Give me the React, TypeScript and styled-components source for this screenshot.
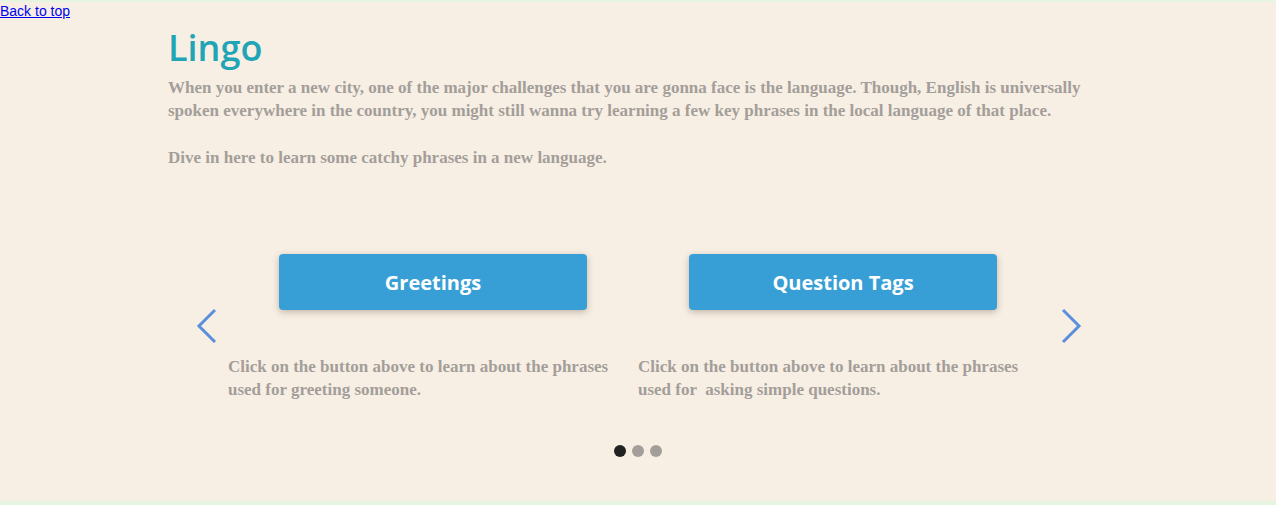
import React from 'react';
import styled, { createGlobalStyle } from 'styled-components';

const GlobalStyle = createGlobalStyle`
  html, body {
    margin: 0;
    padding: 0;
    background: #e6f5e0;
  }
`;

const Page = styled.div`
  margin: 2px 0 0 0;
  height: 499px;
  background: #f8efe4;
  overflow: hidden;
`;

const BackLink = styled.a`
  display: inline-block;
  font-family: 'Liberation Sans', Arial, sans-serif;
  font-size: 14px;
  line-height: 16px;
  color: #0000ee;
  text-decoration: underline;
`;

const Container = styled.div`
  width: 940px;
  margin: 0 auto;
`;

const Title = styled.h1`
  margin: 6px 0 6px 0;
  padding: 0;
  font-family: 'Open Sans', sans-serif;
  font-size: 36px;
  line-height: 44px;
  font-weight: 600;
  color: #1fa5b6;
`;

const Text = styled.p<{ gap?: number }>`
  margin: ${(props) => props.gap ?? 0}px 0 0 0;
  padding: 0;
  font-family: 'Liberation Serif', 'Times New Roman', serif;
  font-weight: bold;
  font-size: 17px;
  line-height: 23px;
  color: #a39e9a;
`;

const Carousel = styled.div`
  margin-top: 85px;
  display: flex;
  align-items: center;
`;

const ArrowCell = styled.button<{ side: 'left' | 'right' }>`
  width: 60px;
  display: flex;
  justify-content: ${(props) => (props.side === 'left' ? 'flex-end' : 'flex-start')};
  padding: ${(props) => (props.side === 'left' ? '0 10px 0 0' : '0 0 0 12px')};
  background: none;
  border: none;
  cursor: pointer;
  margin-top: -4px;
`;

const Slides = styled.div`
  display: flex;
  width: 820px;
`;

const Slide = styled.div`
  width: 410px;
  display: flex;
  flex-direction: column;
`;

const TopicButton = styled.button`
  align-self: center;
  width: 308px;
  height: 56px;
  border: none;
  border-radius: 4px;
  background: #389fd6;
  box-shadow: 0 2px 7px rgba(60, 40, 20, 0.3);
  color: #fff;
  font-family: 'Open Sans', sans-serif;
  font-size: 20px;
  font-weight: 700;
  cursor: pointer;
`;

const SlideText = styled(Text)`
  margin-top: 45px;
`;

const Dots = styled.div`
  margin-top: 44px;
  display: flex;
  justify-content: center;
  gap: 6px;
`;

const Dot = styled.span<{ active?: boolean }>`
  width: 12px;
  height: 12px;
  border-radius: 50%;
  background: ${(props) => (props.active ? '#222222' : '#a39e9a')};
`;

const Chevron: React.FC<{ dir: 'left' | 'right' }> = ({ dir }) => (
  <svg width="22" height="36" viewBox="0 0 22 36">
    <path
      d={dir === 'left' ? 'M19 2 L3 18 L19 34' : 'M3 2 L19 18 L3 34'}
      fill="none"
      stroke="#5a8fdd"
      strokeWidth="3"
    />
  </svg>
);

const topics = [
  {
    title: 'Greetings',
    lines: ['Click on the button above to learn about the phrases', 'used for greeting someone.'],
  },
  {
    title: 'Question Tags',
    lines: ['Click on the button above to learn about the phrases', 'used for \u00a0asking simple questions.'],
  },
];

export default function App() {
  return (
    <>
      <GlobalStyle />
      <Page>
        <BackLink href="#">Back to top</BackLink>
        <Container>
          <Title>Lingo</Title>
          <Text>
            When you enter a new city, one of the major challenges that you are gonna face is the language. Though, English is universally
            <br />
            spoken everywhere in the country, you might still wanna try learning a few key phrases in the local language of that place.
          </Text>
          <Text gap={24}>Dive in here to learn some catchy phrases in a new language.</Text>

          <Carousel>
            <ArrowCell side="left">
              <Chevron dir="left" />
            </ArrowCell>
            <Slides>
              {topics.map((t) => (
                <Slide key={t.title}>
                  <TopicButton>{t.title}</TopicButton>
                  <SlideText>
                    {t.lines[0]}
                    <br />
                    {t.lines[1]}
                  </SlideText>
                </Slide>
              ))}
            </Slides>
            <ArrowCell side="right">
              <Chevron dir="right" />
            </ArrowCell>
          </Carousel>
          <Dots>
            <Dot active />
            <Dot />
            <Dot />
          </Dots>
        </Container>
      </Page>
    </>
  );
}
